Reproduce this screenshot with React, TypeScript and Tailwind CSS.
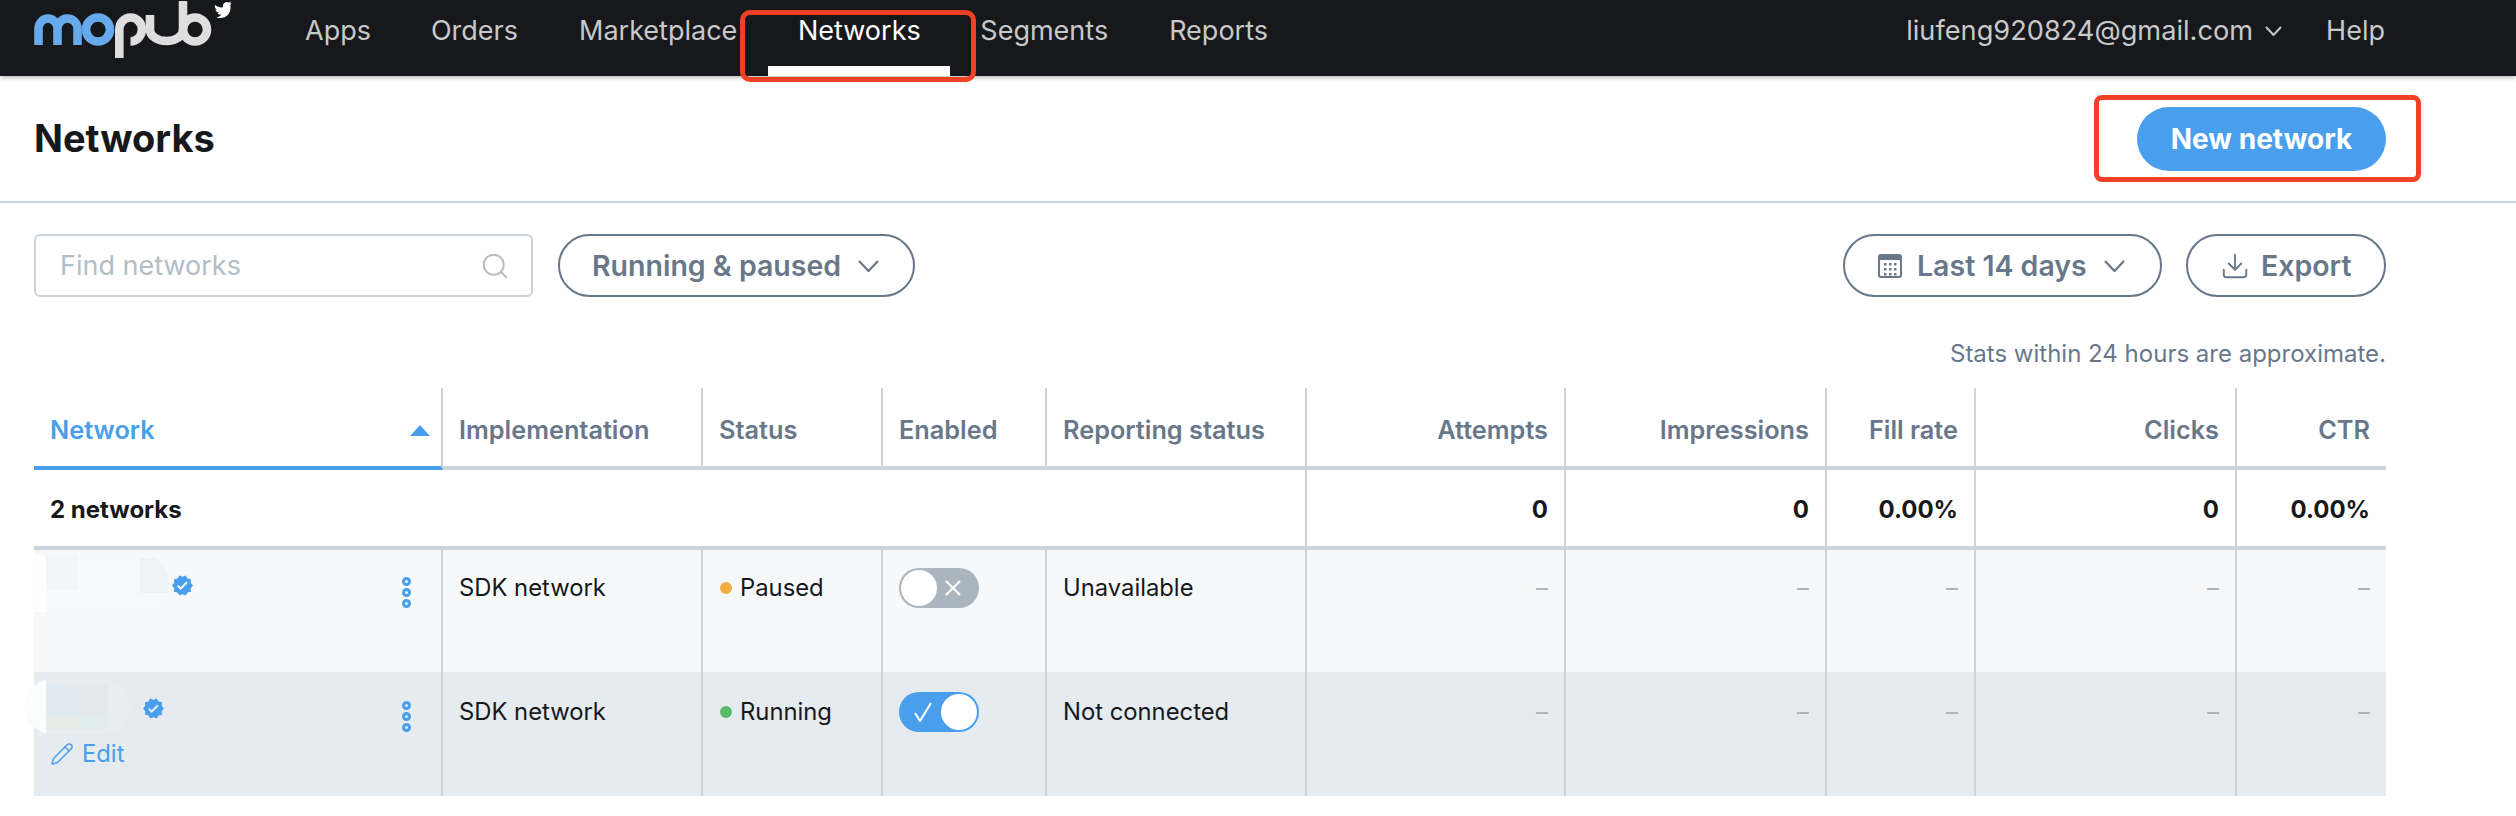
import { Download, Pencil, Search } from "lucide-react";
import { FaTwitter } from "react-icons/fa";
import { MdVerified } from "react-icons/md";

const cols = "grid grid-cols-[409px_260px_180px_164px_260px_259px_261px_149px_261px_149px]";
const cellBorder = "border-r-2 border-[#ccd4db]";

const navItems = ["Apps", "Orders", "Marketplace"];
const headers = ["Implementation", "Status", "Enabled", "Reporting status"];
const numHeaders = ["Attempts", "Impressions", "Fill rate", "Clicks", "CTR"];
const totals = ["0", "0", "0.00%", "0", "0.00%"];

const Logo = () => (
  <svg width="185" height="60" viewBox="0 0 185 60" fill="none" className="block">
    <path d="M8.5 45V29A9.5 10.5 0 0 1 27.5 29V45M27.5 29A10 10.5 0 0 1 47.5 29V45" stroke="#66aaec" strokeWidth="8.6" />
    <circle cx="68" cy="29.5" r="12" stroke="#66aaec" strokeWidth="8.6" />
    <path d="M89.3 58V29.5A11.3 12 0 1 1 100.5 41.5" stroke="#dedede" strokeWidth="8.6" />
    <path d="M120 15V30A16.5 11 0 0 0 153 30" stroke="#dedede" strokeWidth="8.6" />
    <path d="M153 1V30" stroke="#dedede" strokeWidth="8.6" />
    <circle cx="165" cy="29.5" r="12" stroke="#dedede" strokeWidth="8.6" />
  </svg>
);

const Chevron = ({ w, h, sw }: { w: number; h: number; sw: number }) => (
  <svg width={w} height={h} viewBox={`0 0 ${w} ${h}`} fill="none" className="shrink-0">
    <path d={`M1 1L${w / 2} ${h - 1}L${w - 1} 1`} stroke="currentColor" strokeWidth={sw} />
  </svg>
);

const Dots = () => (
  <div className="flex flex-col gap-[2px] mt-[5px]">
    <span className="block w-[9px] h-[9px] rounded-full border-[3px] border-[#4a9fec]" />
    <span className="block w-[9px] h-[9px] rounded-full border-[3px] border-[#4a9fec]" />
    <span className="block w-[9px] h-[9px] rounded-full border-[3px] border-[#4a9fec]" />
  </div>
);

const Calendar = () => (
  <svg width="24" height="24" viewBox="0 0 24 24" className="shrink-0">
    <rect x="1" y="1" width="22" height="22" rx="2" fill="none" stroke="#68788a" strokeWidth="2" />
    <rect x="1" y="1" width="22" height="5" fill="#68788a" />
    {[6, 11, 16].map((x) =>
      [9, 14, 19].map((y) => <rect key={`${x}-${y}`} x={x} y={y} width="2.5" height="2.5" fill="#68788a" />)
    )}
  </svg>
);

const Toggle = ({ on }: { on: boolean }) =>
  on ? (
    <div className="flex w-[80px] h-[40px] rounded-full items-center justify-between pl-[15px] pr-[2px] bg-[#4a9fec]">
      <svg width="18" height="20" viewBox="0 0 18 20" fill="none">
        <path d="M1 11L6 19L17 1" stroke="white" strokeWidth="2" />
      </svg>
      <span className="block w-[36px] h-[36px] rounded-full bg-white" />
    </div>
  ) : (
    <div className="flex w-[80px] h-[40px] rounded-full items-center pl-[2px] bg-[#abb5bd]">
      <span className="block w-[36px] h-[36px] rounded-full bg-white" />
      <svg width="16" height="16" viewBox="0 0 16 16" fill="none" className="ml-[8px]">
        <path d="M1 1L15 15M15 1L1 15" stroke="white" strokeWidth="2.2" />
      </svg>
    </div>
  );

const Row = ({ on, bg }: { on: boolean; bg: string }) => {
  const pad = on ? "pt-[24px]" : "pt-[22px]";
  return (
    <div className={`${cols} ${bg} text-[23.8px] leading-[32px] text-[#16181c]`}>
      <div className={`${cellBorder} flex flex-col ${on ? "h-[124px]" : "h-[122px]"}`}>
        <div className="flex justify-between items-start pr-[30px]">
          {on ? (
            <div className="flex items-start pt-[7px]">
              {/* blurred-out name */}
              <div className="flex w-[105px] h-[55px] -ml-[9px] rounded-[27px] overflow-hidden bg-[#e8edf1]">
                <div className="w-[21px] bg-[#fbfdfc]" />
                <div className="grid grid-cols-[32px_30px] grid-rows-[31px_14px] pt-[5px]">
                  <div className="bg-[#e1e9f1]" />
                  <div className="bg-[#e4e9ef]" />
                  <div className="bg-[#e9ebe9]" />
                  <div className="bg-[#e2edf1]" />
                </div>
              </div>
              <MdVerified size={23} className="text-[#4a9fec] mt-[18px] ml-[12px]" />
            </div>
          ) : (
            <div className="flex items-start pt-[5px]">
              {/* blurred-out name */}
              <div className="flex w-[135px] h-[57px] rounded-r-[26px] overflow-hidden bg-[#f6fafa]">
                <div className="w-[12px] bg-[#fdfefe]" />
                <div className="w-[32px] h-[35px] bg-[#f1f7f7]" />
                <div className="w-[62px]" />
                <div className="w-[29px] h-[35px] mt-[3px] bg-[#eef3f6]" />
              </div>
              <MdVerified size={23} className="text-[#4a9fec] mt-[19px] ml-[2px]" />
            </div>
          )}
          <div className={pad}>
            <Dots />
          </div>
        </div>
        {on && (
          <div className="flex items-center gap-[8px] pl-[16px] mt-[4px] text-[#4a9fec]">
            <Pencil size={24} strokeWidth={1.5} />
            <span>Edit</span>
          </div>
        )}
      </div>
      <div className={`${cellBorder} pl-[16px] ${pad}`}>SDK network</div>
      <div className={`${cellBorder} pl-[17px] ${pad} flex items-start gap-[8px]`}>
        <span className={`block w-[12px] h-[12px] rounded-full mt-[10px] ${on ? "bg-[#5cb96d]" : "bg-[#f5ad42]"}`} />
        {on ? "Running" : "Paused"}
      </div>
      <div className={`${cellBorder} pl-[16px] ${on ? "pt-[20px]" : "pt-[18px]"}`}>
        <Toggle on={on} />
      </div>
      <div className={`${cellBorder} pl-[16px] ${pad}`}>{on ? "Not connected" : "Unavailable"}</div>
      {numHeaders.map((h, i) => (
        <div key={h} className={`${i < 4 ? cellBorder : ""} pr-[16px] ${pad} text-right text-[#abb5bd]`}>
          –
        </div>
      ))}
    </div>
  );
};

export default function App() {
  return (
    <div className="relative w-[2516px] h-[816px] bg-white overflow-hidden font-['Inter',sans-serif]">
      {/* Top nav */}
      <div className="h-[76px] bg-[#17181c] flex items-start shadow-[0_2px_4px_rgba(0,0,0,0.25)] text-[27px] leading-[62px] text-[#c8c9cb]">
        <div className="pl-[30px] w-[305px] shrink-0">
          <div className="relative w-[215px]">
            <Logo />
            <FaTwitter size={18} className="absolute left-[185px] top-[1px] text-white rotate-[-12deg]" />
          </div>
        </div>
        <div className="flex">
          {navItems.map((n, i) => (
            <div key={n} className={i === 0 ? "mr-[60px]" : i === 1 ? "mr-[61px]" : "mr-[31px]"}>
              {n}
            </div>
          ))}
          <div className="h-[76px] w-[182px] border-b-[10px] border-white text-white text-center">Networks</div>
          <div className="ml-[30px] mr-[61px]">Segments</div>
          <div>Reports</div>
        </div>
        <div className="ml-auto flex items-start pr-[131px]">
          <span className="text-[27.2px]">liufeng920824@gmail.com</span>
          <span className="ml-[12px] mr-[44px] mt-[26px]">
            <Chevron w={17} h={10} sw={2} />
          </span>
          <span>Help</span>
        </div>
      </div>

      {/* Page title */}
      <div className="h-[127px] border-b-2 border-[#ccd4db] flex items-center justify-between pl-[34px] pr-[130px]">
        <h1 className="text-[38px] font-bold text-[#16181c]">Networks</h1>
        <button className="w-[249px] h-[64px] rounded-full bg-[#4a9fec] text-white text-[28px] font-bold">New network</button>
      </div>

      {/* Filters */}
      <div className="flex items-center justify-between pl-[34px] pr-[130px] pt-[31px] text-[#68788a] text-[28.5px] font-semibold">
        <div className="flex gap-[25px]">
          <div className="w-[499px] h-[63px] border-2 border-[#ccd4db] rounded-[6px] flex items-center justify-between pl-[24px] pr-[21px] font-normal text-[#b3bdc6]">
            <span className="text-[27px] pt-[2px]">Find networks</span>
            <Search size={30} strokeWidth={1.5} />
          </div>
          <div className="w-[357px] h-[63px] border-2 border-[#68788a] rounded-full flex items-center pl-[32px] gap-[17px]">
            <span className="pt-[2px]">Running &amp; paused</span>
            <Chevron w={21} h={12} sw={2.2} />
          </div>
        </div>
        <div className="flex gap-[24px]">
          <div className="w-[319px] h-[63px] border-2 border-[#68788a] rounded-full flex items-center pl-[33px] gap-[15px]">
            <Calendar />
            <span className="pt-[2px]">Last 14 days</span>
            <span className="ml-[2px]">
              <Chevron w={21} h={12} sw={2.2} />
            </span>
          </div>
          <div className="w-[200px] h-[63px] border-2 border-[#68788a] rounded-full flex items-center pl-[32px] gap-[11px]">
            <Download size={30} strokeWidth={1.5} />
            <span className="pt-[2px]">Export</span>
          </div>
        </div>
      </div>

      <div className="pr-[130px] pt-[43px] text-right text-[24px] leading-[28px] text-[#68788a]">
        Stats within 24 hours are approximate.
      </div>

      {/* Table */}
      <div className="ml-[34px] w-[2352px] mt-[20px]">
        <div className={`${cols} h-[82px] border-b-4 border-[#ccd4db] text-[25.3px] font-semibold text-[#68788a]`}>
          <div className={`${cellBorder} -mb-[4px] border-b-4 border-b-[#4a9fec] pl-[16px] pr-[11px] pt-[6px] flex items-center justify-between text-[#4a9fec]`}>
            Network
            <span className="w-0 h-0 border-l-[10px] border-r-[10px] border-b-[11px] border-l-transparent border-r-transparent border-b-[#4a9fec]" />
          </div>
          {headers.map((h) => (
            <div key={h} className={`${cellBorder} pl-[16px] pt-[6px] flex items-center`}>
              {h}
            </div>
          ))}
          {numHeaders.map((h, i) => (
            <div key={h} className={`${i < 4 ? cellBorder : ""} pr-[16px] pt-[6px] flex items-center justify-end`}>
              {h}
            </div>
          ))}
        </div>

        <div className={`${cols} h-[80px] border-b-4 border-[#ccd4db] text-[24px] font-bold text-[#16181c]`}>
          <div className="col-span-5 border-r-2 border-[#ccd4db] pl-[16px] pt-[4px] flex items-center">2 networks</div>
          {totals.map((t, i) => (
            <div key={i} className={`${i < 4 ? cellBorder : ""} pr-[16px] pt-[4px] flex items-center justify-end`}>
              {t}
            </div>
          ))}
        </div>

        <Row on={false} bg="bg-[#f6f8fa]" />
        <Row on={true} bg="bg-[#e6ebef]" />
      </div>

      {/* Red annotations */}
      <div className="absolute left-[740px] top-[10px] w-[236px] h-[72px] border-[5px] border-[#ee4125] rounded-[10px]" />
      <div className="absolute left-[2094px] top-[95px] w-[327px] h-[87px] border-[5px] border-[#ee4125] rounded-[8px]" />
    </div>
  );
}
